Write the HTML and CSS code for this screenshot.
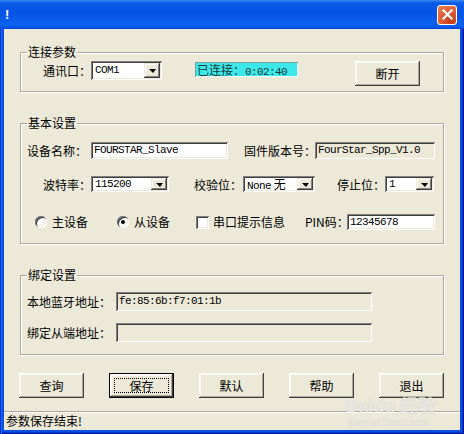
FILE: index.html
```html
<!DOCTYPE html>
<html lang="zh-CN">
<head>
    <meta charset="UTF-8">
    <meta name="viewport" content="width=device-width, initial-scale=1.0">
    <title>!</title>
    <link rel="stylesheet" href="styles.css">
</head>
<body>
    <div class="window">
        <div class="titlebar">
            <span class="title">!</span>
            <span class="close-btn">
                <svg width="11" height="11" viewBox="0 0 11 11"><path d="M1.5 1.5 L9.5 9.5 M9.5 1.5 L1.5 9.5" stroke="#fff" stroke-width="2.2" stroke-linecap="square"/></svg>
            </span>
        </div>
        <div class="client">
            <div class="content">
                <fieldset class="group">
                    <legend>连接参数</legend>
                    <div class="row row-conn">
                        <span class="lbl lbl-port">通讯口：</span>
                        <div class="combo combo-port"><span class="combo-text mono">COM1</span><span class="drop"></span></div>
                        <div class="conn-status">已连接：<span class="mono">0:02:40</span></div>
                        <button class="btn btn-disconnect">断开</button>
                    </div>
                </fieldset>

                <fieldset class="group group-basic">
                    <legend>基本设置</legend>
                    <div class="row row-name">
                        <span class="lbl lbl-name">设备名称：</span>
                        <div class="edit edit-name mono">FOURSTAR_Slave</div>
                        <span class="lbl lbl-fw">固件版本号：</span>
                        <div class="edit edit-fw readonly mono">FourStar_Spp_V1.0</div>
                    </div>
                    <div class="row row-serial">
                        <span class="lbl lbl-baud">波特率：</span>
                        <div class="combo combo-baud"><span class="combo-text mono">115200</span><span class="drop"></span></div>
                        <span class="lbl lbl-parity">校验位：</span>
                        <div class="combo combo-parity"><span class="combo-text"><span class="mono">None</span>&nbsp;无</span><span class="drop"></span></div>
                        <span class="lbl lbl-stop">停止位：</span>
                        <div class="combo combo-stop"><span class="combo-text mono">1</span><span class="drop"></span></div>
                    </div>
                    <div class="row row-role">
                        <label class="opt opt-master"><span class="radio"></span>主设备</label>
                        <label class="opt opt-slave"><span class="radio checked"></span>从设备</label>
                        <label class="opt opt-tips"><span class="check"></span>串口提示信息</label>
                        <span class="lbl lbl-pin">PIN码：</span>
                        <div class="edit edit-pin mono">12345678</div>
                    </div>
                </fieldset>

                <fieldset class="group group-bind">
                    <legend>绑定设置</legend>
                    <div class="row row-local">
                        <span class="lbl lbl-addr">本地蓝牙地址：</span>
                        <div class="edit edit-addr readonly mono">fe:85:6b:f7:01:1b</div>
                    </div>
                    <div class="row row-remote">
                        <span class="lbl lbl-addr">绑定从端地址：</span>
                        <div class="edit edit-addr readonly mono"></div>
                    </div>
                </fieldset>

                <div class="actions">
                    <button class="btn">查询</button>
                    <button class="btn btn-default"><span class="focus">保存</span></button>
                    <button class="btn">默认</button>
                    <button class="btn">帮助</button>
                    <button class="btn">退出</button>
                </div>
            </div>
            <div class="statusbar">参数保存结束!</div>
        </div>
        <div class="watermark">
            <span class="wm-logo">Bai<b>du</b> 经验</span>
            <span class="wm-url">jingyan.baidu.com</span>
        </div>
    </div>
</body>
</html>
```

FILE: styles.css
```css
* {
    box-sizing: border-box;
}
body {
    margin: 0;
    font-family: "Noto Sans CJK SC", "Liberation Sans", sans-serif;
    font-size: 12px;
    color: #000;
}
.window {
    position: relative;
    width: 464px;
    height: 434px;
    display: flex;
    flex-direction: column;
    background: #0a50e0;
    box-shadow: inset 1px 0 #0831d9, inset 2px 0 #166aee, inset -1px -1px #00138c, inset -2px -2px #003bda;
    overflow: hidden;
}
.titlebar {
    height: 29px;
    flex: none;
    display: flex;
    align-items: center;
    justify-content: space-between;
    padding: 0 7px 0 4px;
    background: linear-gradient(180deg, #3d8cf5 0, #0a5ae8 10%, #0653e6 45%, #0a62f0 85%, #0558ec 93%, #0447d6 100%);
}
.title {
    color: #fff;
    font-family: "Liberation Sans", sans-serif;
    font-weight: bold;
    font-size: 13px;
    padding-left: 1px;
}
.close-btn {
    width: 20px;
    height: 20px;
    display: flex;
    align-items: center;
    justify-content: center;
    border: 1px solid #fff;
    border-radius: 3px;
    background: radial-gradient(circle at 70% 80%, #c23a17 0, #df5a32 45%, #e8805e 100%);
}
.client {
    flex: 1;
    margin: 0 4px 4px;
    background: #ece9d8;
    display: flex;
    flex-direction: column;
}
.content {
    padding: 16px 0 0 16px;
}
.mono {
    font-family: "Liberation Mono", monospace;
    font-size: 11px;
    letter-spacing: -0.6px;
}

/* group boxes */
.group {
    margin: 0;
    padding: 0;
    width: 424px;
    min-width: 0;
    border: 1px solid #aca899;
    box-shadow: inset 1px 1px #fff, 1px 1px #fff;
}
.group legend {
    margin-left: 6px;
    padding: 0 1px;
    font-size: 12px;
    line-height: 14px;
}
.group-basic,
.group-bind {
    margin-top: 24px;
}
.row {
    display: flex;
    align-items: center;
    white-space: nowrap;
}
.lbl {
    flex: none;
}
.row-conn {
    align-items: flex-start;
    padding: 2px 0 5px 22px;
    line-height: 19px;
}
.lbl-port { width: 48px; }
.row-name {
    padding: 12px 0 0 6px;
    height: 29px;
}
.lbl-name { width: 64px; }
.lbl-fw { width: 71px; margin-left: 16px; }
.row-serial {
    margin-top: 17px;
    padding-left: 22px;
    height: 16px;
}
.lbl-baud { width: 48px; }
.lbl-parity { width: 49px; margin-left: 25px; }
.lbl-stop { width: 48px; margin-left: 22px; }
.row-role {
    margin-top: 22px;
    padding: 0 0 13px 14px;
    height: 29px;
    align-items: flex-start;
    line-height: 16px;
}
.lbl-pin { width: 42px; }
.row-local {
    padding: 10px 0 0 6px;
    height: 29px;
}
.row-remote {
    margin-top: 12px;
    padding: 0 0 12px 6px;
    height: 31px;
}
.lbl-addr { width: 89px; }

/* controls */
.edit,
.combo {
    flex: none;
    background: #fff;
    box-shadow: inset 1px 1px #808080, inset -1px -1px #fff, inset 2px 2px #404040, inset -2px -2px #ece9d8;
}
.edit {
    padding: 0 2px 0 3px;
    overflow: hidden;
}
.edit.readonly {
    background: #ece9d8;
}
.edit-name { width: 137px; height: 17px; line-height: 17px; }
.edit-fw { width: 120px; height: 17px; line-height: 17px; }
.edit-pin { width: 88px; height: 16px; line-height: 16px; }
.edit-addr { width: 256px; height: 19px; line-height: 19px; }
.combo {
    display: flex;
    padding: 2px;
}
.combo-text {
    flex: 1;
    padding-left: 2px;
    line-height: 12px;
    white-space: pre;
}
.combo-port .combo-text { line-height: 15px; }
.combo-port { width: 71px; height: 19px; }
.combo-baud { width: 78px; height: 16px; }
.combo-parity { width: 72px; height: 16px; }
.combo-stop { width: 49px; height: 16px; }
.drop {
    width: 16px;
    flex: none;
    display: flex;
    align-items: center;
    justify-content: center;
    background: #ece9d8;
    box-shadow: inset -1px -1px #404040, inset 1px 1px #ece9d8, inset -2px -2px #808080, inset 2px 2px #fff;
}
.drop::after {
    content: "";
    border-top: 4px solid #000;
    border-left: 4px solid transparent;
    border-right: 3px solid transparent;
    margin-top: 1px;
}
.conn-status {
    width: 103px;
    height: 15px;
    margin: 1px 0 0 33px;
    padding-left: 2px;
    background: #3ce8e8;
    color: #1d3a3a;
    line-height: 15px;
    box-shadow: inset 1px 1px #7a9a9a, inset -1px -1px #e8ffff;
}
.btn {
    flex: none;
    width: 65px;
    height: 25px;
    padding: 0;
    border: none;
    background: #ece9d8;
    font-family: inherit;
    font-size: 12px;
    color: #000;
    box-shadow: inset -1px -1px #404040, inset 1px 1px #fff, inset -2px -2px #aca899, inset 2px 2px #f7f6ef;
}
.btn-disconnect {
    margin-left: 57px;
}
.btn-default {
    border: 1px solid #000;
    display: flex;
    align-items: center;
    justify-content: center;
}
.btn-default .focus {
    width: 55px;
    height: 15px;
    line-height: 14px;
    border: 1px dotted #000;
}
.opt {
    flex: none;
    display: flex;
    align-items: center;
    height: 16px;
}
.opt-master { width: 82px; }
.opt-slave { width: 79px; }
.opt-tips { width: 109px; }
.radio,
.check {
    flex: none;
    width: 12px;
    height: 12px;
    margin-right: 5px;
    background: #fff;
    display: flex;
    align-items: center;
    justify-content: center;
    box-shadow: inset 1px 1px #808080, inset -1px -1px #fff, inset 2px 2px #404040, inset -2px -2px #ece9d8;
}
.radio {
    border-radius: 50%;
}
.radio.checked::after {
    content: "";
    width: 4px;
    height: 4px;
    border-radius: 50%;
    background: #000;
}
.check {
    width: 13px;
    height: 13px;
    margin-right: 4px;
}

/* bottom */
.actions {
    display: flex;
    justify-content: space-between;
    width: 425px;
    margin: 18px 0 0 -1px;
}
.statusbar {
    margin-top: auto;
    height: 19px;
    padding: 0 0 0 2px;
    line-height: 17px;
    border-top: 1px solid #aca899;
    box-shadow: inset 0 1px #fff;
}
.watermark {
    position: absolute;
    left: 345px;
    top: 399px;
    display: flex;
    flex-direction: column;
    color: rgba(255, 255, 255, 0.6);
    text-shadow: 0 0 1px rgba(120, 120, 120, 0.35);
    pointer-events: none;
}
.wm-logo {
    font-family: "Liberation Sans", sans-serif;
    font-weight: bold;
    font-size: 18px;
    line-height: 14px;
}
.wm-url {
    font-family: "Liberation Sans", sans-serif;
    font-size: 10px;
    line-height: 12px;
    margin-top: 4px;
    padding-left: 4px;
}
```
